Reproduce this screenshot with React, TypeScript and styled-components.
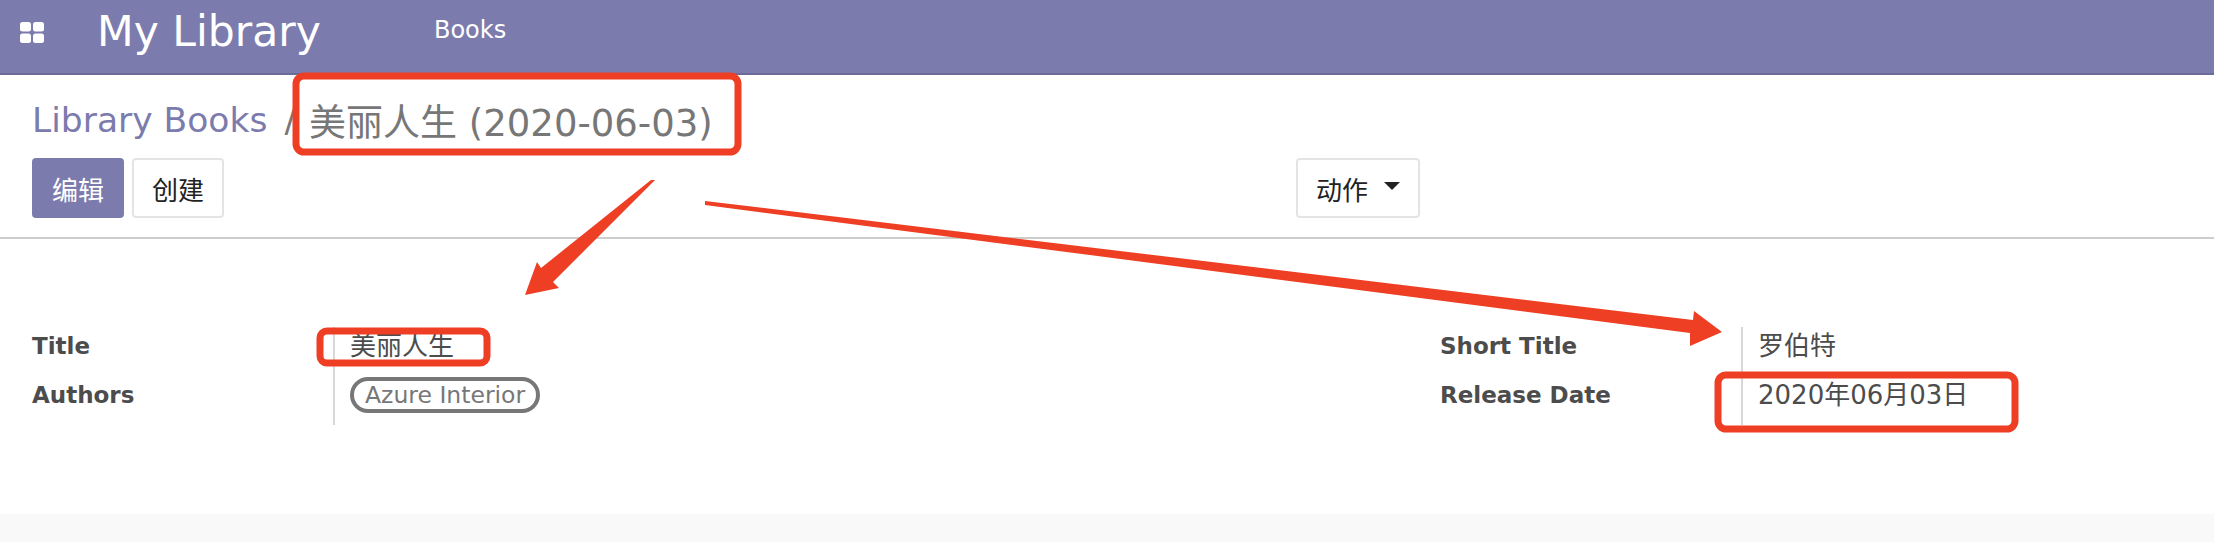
import React from 'react';
import styled, { createGlobalStyle } from 'styled-components';

const PURPLE = '#7c7bad';
const RED = '#ee3f24';

const GlobalStyle = createGlobalStyle`
  html, body {
    margin: 0;
    padding: 0;
    background: #fff;
  }
  body {
    font-family: 'DejaVu Sans', 'Noto Sans CJK SC', sans-serif;
  }
`;

const Page = styled.div`
  position: relative;
  width: 2214px;
  height: 542px;
  overflow: hidden;
  display: flex;
  flex-direction: column;
  background: #fff;
`;

const NavBar = styled.header`
  flex: none;
  height: 73px;
  display: flex;
  align-items: center;
  background: ${PURPLE};
  border-bottom: 2px solid #6b6a99;
  color: #fff;
  padding-left: 20px;
`;

const AppsIcon = styled.svg`
  width: 24px;
  height: 21px;
  flex: none;
  margin-bottom: 9px;
`;

const Brand = styled.div`
  margin-left: 53px;
  font-size: 42.5px;
  line-height: 60px;
  margin-bottom: 9px;
`;

const NavLink = styled.a`
  margin-left: 113px;
  font-size: 24px;
  margin-bottom: 13px;
`;

const ControlPanel = styled.div`
  flex: none;
  height: 164px;
  box-sizing: border-box;
  padding: 23px 32px 0;
  border-bottom: 2px solid #cdcdcd;
`;

const Breadcrumb = styled.div`
  display: flex;
  align-items: center;
  height: 44px;
  font-size: 34.5px;
  color: #777;
`;

const CrumbLink = styled.a`
  color: ${PURPLE};
`;

const CrumbSlash = styled.span`
  margin: 0 13px 0 17px;
`;

const CrumbCurrent = styled.span`
  font-size: 37px;
`;

const ButtonRow = styled.div`
  display: grid;
  grid-template-columns: 1264px 1fr;
  margin-top: 16px;
`;

const ButtonGroup = styled.div`
  display: flex;
  gap: 8px;
`;

const Button = styled.button<{ $primary?: boolean }>`
  height: 60px;
  box-sizing: border-box;
  padding: 0 18px;
  border-radius: 4px;
  border: 2px solid ${p => (p.$primary ? PURPLE : '#e4e4e4')};
  background: ${p => (p.$primary ? PURPLE : '#fff')};
  color: ${p => (p.$primary ? '#fff' : '#222')};
  font-family: inherit;
  font-size: 26px;
  display: flex;
  align-items: center;
`;

const Caret = styled.span`
  width: 0;
  height: 0;
  margin-left: 16px;
  margin-bottom: 4px;
  border-top: 8px solid #222;
  border-left: 8px solid transparent;
  border-right: 8px solid transparent;
`;

const Sheet = styled.main`
  flex: 1;
  display: grid;
  grid-template-columns: 1408px 1fr;
  align-items: start;
  padding: 88px 0 0 32px;
`;

const FieldGroup = styled.div<{ $labelWidth: number }>`
  display: grid;
  grid-template-columns: ${p => p.$labelWidth}px 1fr;
  grid-auto-rows: 49px;
`;

const Label = styled.div`
  font-size: 23px;
  font-weight: 700;
  line-height: 38px;
  color: #4c4c4c;
`;

const Value = styled.div`
  border-left: 2px solid #d8d8d8;
  padding-left: 15px;
  font-size: 26px;
  line-height: 38px;
  color: #4c4c4c;
`;

const Pill = styled.span`
  display: inline-block;
  box-sizing: border-box;
  height: 36px;
  line-height: 28px;
  margin-top: 1px;
  padding: 0 11px;
  border: 4px solid #777;
  border-radius: 18px;
  color: #777;
  font-size: 23.5px;
  vertical-align: top;
`;

const Footer = styled.div`
  flex: none;
  height: 28px;
  background: #f9f9f9;
`;

const Annotations = styled.svg`
  position: absolute;
  top: 0;
  left: 0;
  pointer-events: none;
`;

const App: React.FC = () => (
  <Page>
    <GlobalStyle />
    <NavBar>
      <AppsIcon viewBox="0 0 24 21">
        <rect x="0" y="0" width="11" height="9.5" rx="2.5" fill="#fff" />
        <rect x="13" y="0" width="11" height="9.5" rx="2.5" fill="#fff" />
        <rect x="0" y="11.5" width="11" height="9.5" rx="2.5" fill="#fff" />
        <rect x="13" y="11.5" width="11" height="9.5" rx="2.5" fill="#fff" />
      </AppsIcon>
      <Brand>My Library</Brand>
      <NavLink>Books</NavLink>
    </NavBar>
    <ControlPanel>
      <Breadcrumb>
        <CrumbLink>Library Books</CrumbLink>
        <CrumbSlash>/</CrumbSlash>
        <CrumbCurrent>美丽人生 (2020-06-03)</CrumbCurrent>
      </Breadcrumb>
      <ButtonRow>
        <ButtonGroup>
          <Button $primary>编辑</Button>
          <Button>创建</Button>
        </ButtonGroup>
        <ButtonGroup>
          <Button>动作<Caret /></Button>
        </ButtonGroup>
      </ButtonRow>
    </ControlPanel>
    <Sheet>
      <FieldGroup $labelWidth={301}>
        <Label>Title</Label>
        <Value>美丽人生</Value>
        <Label>Authors</Label>
        <Value><Pill>Azure Interior</Pill></Value>
      </FieldGroup>
      <FieldGroup $labelWidth={301}>
        <Label>Short Title</Label>
        <Value>罗伯特</Value>
        <Label>Release Date</Label>
        <Value>2020年06月03日</Value>
      </FieldGroup>
    </Sheet>
    <Footer />
    <Annotations width="2214" height="542" viewBox="0 0 2214 542">
      <rect x="296" y="76" width="442" height="76" rx="8" fill="none" stroke={RED} strokeWidth="7" />
      <rect x="320" y="331" width="167" height="32" rx="7" fill="none" stroke={RED} strokeWidth="7" />
      <rect x="1718" y="375" width="297" height="54" rx="8" fill="none" stroke={RED} strokeWidth="7" />
      <polygon points="655,180 553,282 559,288 525,295 537,262 541,268 651,180" fill={RED} />
      <polygon points="705,201 1693,320 1694,311 1722,332 1690,346 1690,333 705,205" fill={RED} />
    </Annotations>
  </Page>
);

export default App;
